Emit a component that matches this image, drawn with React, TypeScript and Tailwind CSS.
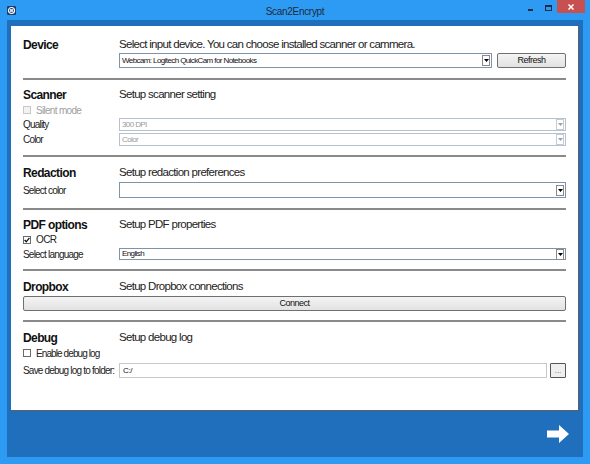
import React from 'react';

const Arrow = ({ disabled }: { disabled?: boolean }) => (
  <div
    className={`w-[8px] h-[11px] border flex items-center justify-center bg-white ${
      disabled ? 'border-[#c4ccd6]' : 'border-[#8a8a8a]'
    }`}
  >
    <svg width="5" height="3" viewBox="0 0 5 3">
      <polygon points="0,0 5,0 2.5,3" fill={disabled ? '#a0a0a0' : '#000'} />
    </svg>
  </div>
);

const Select = ({ text, disabled, className = '' }: { text?: string; disabled?: boolean; className?: string }) => (
  <div
    className={`flex items-center h-full bg-white border pl-[2px] pr-px ${
      disabled ? 'border-[#b6c2d0]' : 'border-[#7f93aa]'
    } ${className}`}
  >
    <span
      className={`flex-1 text-[8px] tracking-[-0.6px] leading-none ${disabled ? 'text-[#9a9a9a]' : 'text-[#111]'}`}
    >
      {text}
    </span>
    <Arrow disabled={disabled} />
  </div>
);

const Button = ({ label, className = '' }: { label: string; className?: string }) => (
  <div
    className={`flex items-center justify-center h-full border border-[#707070] rounded-[2px] bg-gradient-to-b from-[#f4f4f4] to-[#e2e2e2] text-[9px] tracking-[-0.5px] text-[#111] ${className}`}
  >
    {label}
  </div>
);

const Check = ({ checked, disabled }: { checked?: boolean; disabled?: boolean }) => (
  <div
    className={`w-[8px] h-[8px] border flex items-center justify-center ${
      disabled ? 'border-[#c8c8c8] bg-[#f2f2f2]' : 'border-[#6a6a6a] bg-white'
    }`}
  >
    {checked && (
      <svg width="6" height="6" viewBox="0 0 6 6">
        <path d="M0.6 3 L2.3 4.8 L5.4 0.9" stroke="#111" strokeWidth="1.3" fill="none" />
      </svg>
    )}
  </div>
);

const Heading = ({ title, desc, className = '' }: { title: string; desc: string; className?: string }) => (
  <div className={`flex items-center h-[16px] ${className}`}>
    <span className="w-[96px] text-[12px] font-bold tracking-[-0.6px] text-[#111]">{title}</span>
    <span className="text-[11.5px] tracking-[-0.7px] text-[#222]">{desc}</span>
  </div>
);

const Label = ({ children }: { children: React.ReactNode }) => (
  <span className="w-[96px] shrink-0 text-[10px] tracking-[-0.8px] text-[#222]">{children}</span>
);

const Sep = ({ className = '' }: { className?: string }) => <div className={`h-[2px] bg-[#8a8a8a] ${className}`} />;

export default function App() {
  return (
    <div className="w-[590px] h-[464px] bg-[#2d9bf3] flex flex-col font-['Liberation_Sans',Arial,sans-serif]">
      {/* title bar */}
      <div className="h-[20px] grid grid-cols-[1fr_auto_1fr]">
        <div className="pl-[7px] pt-[6px]">
          <svg width="9" height="9" viewBox="0 0 9 9">
            <rect x="0" y="0" width="9" height="9" rx="1" fill="#1b3f72" />
            <circle cx="4.5" cy="4.5" r="3" stroke="#fff" strokeWidth="1.2" fill="none" />
            <rect x="3" y="3" width="3" height="3" fill="#c9d6e6" />
          </svg>
        </div>
        <div className="pt-[4px] text-[10px] tracking-[-0.3px] text-[#1e2a3a]">Scan2Encrypt</div>
        <div className="flex justify-end items-start pr-[5px]">
          <div className="w-[5px] h-[2px] bg-[#1b2a40] mt-[9px] mr-[12px]" />
          <div className="w-[7px] h-[6px] border border-[#1b2a40] border-t-2 mt-[5px] mr-[5px]" />
          <div className="w-[28px] h-[13px] bg-[#c75050] flex items-center justify-center">
            <svg width="6" height="6" viewBox="0 0 6 6">
              <path d="M0.5 0.5 L5.5 5.5 M5.5 0.5 L0.5 5.5" stroke="#fff" strokeWidth="1.5" />
            </svg>
          </div>
        </div>
      </div>

      {/* body */}
      <div className="flex-1 mx-[7px] mb-[7px] bg-[#1f6fbc] flex flex-col pt-[6px] px-[4px]">
        <div className="h-[385px] bg-white border-r border-b border-[#5f5f5f] pl-[12px] pr-[12px] pt-[11px] flex flex-col">
          {/* Device */}
          <Heading title="Device" desc="Select input device. You can choose installed scanner or cammera." />
          <div className="flex h-[15px] pl-[96px] gap-[5px]">
            <Select text="Webcam: Logitech QuickCam for Notebooks" className="flex-1" />
            <Button label="Refresh" className="w-[69px]" />
          </div>
          <Sep className="mt-[10px]" />

          {/* Scanner */}
          <Heading title="Scanner" desc="Setup scanner setting" className="mt-[7px]" />
          <div className="flex items-center h-[14px] gap-[5px]">
            <Check disabled />
            <span className="text-[10px] tracking-[-0.7px] text-[#a0a0a0]">Silent mode</span>
          </div>
          <div className="flex items-center h-[13px] mt-px">
            <Label>Quality</Label>
            <Select text="300 DPI" disabled className="flex-1" />
          </div>
          <div className="flex items-center h-[13px] mt-[2px]">
            <Label>Color</Label>
            <Select text="Color" disabled className="flex-1" />
          </div>
          <Sep className="mt-[9px]" />

          {/* Redaction */}
          <Heading title="Redaction" desc="Setup redaction preferences" className="mt-[8px]" />
          <div className="flex items-center h-[16px] mt-px">
            <Label>Select color</Label>
            <Select className="flex-1" />
          </div>
          <Sep className="mt-[10px]" />

          {/* PDF options */}
          <Heading title="PDF options" desc="Setup PDF properties" className="mt-[7px]" />
          <div className="flex items-center h-[13px] gap-[5px]">
            <Check checked />
            <span className="text-[10px] tracking-[-0.6px] text-[#222]">OCR</span>
          </div>
          <div className="flex items-center h-[12px] mt-[2px]">
            <Label>Select language</Label>
            <Select text="English" className="flex-1" />
          </div>
          <Sep className="mt-[9px]" />

          {/* Dropbox */}
          <Heading title="Dropbox" desc="Setup Dropbox connections" className="mt-[8px]" />
          <div className="h-[15px] mt-px">
            <Button label="Connect" />
          </div>
          <Sep className="mt-[9px]" />

          {/* Debug */}
          <Heading title="Debug" desc="Setup debug log" className="mt-[8px]" />
          <div className="flex items-center h-[14px] gap-[5px]">
            <Check />
            <span className="text-[10px] tracking-[-0.9px] text-[#222]">Enable debug log</span>
          </div>
          <div className="flex items-center h-[15px] mt-[3px]">
            <Label>Save debug log to folder:</Label>
            <div className="flex-1 h-full border border-[#c8c8c8] bg-white flex items-center pl-[3px] text-[8px] tracking-[-0.4px] text-[#111]">
              C:/
            </div>
            <div className="w-[16px] h-full ml-[3px] border border-[#555] rounded-[1px] bg-[#efefef] flex items-center justify-center text-[8px] leading-none text-[#666]">
              ...
            </div>
          </div>
        </div>

        {/* next arrow */}
        <div className="flex-1 flex items-center justify-end pr-[10px]">
          <svg width="22" height="18" viewBox="0 0 22 18">
            <polygon points="0,5.5 12,5.5 12,0 22,9 12,18 12,12.5 0,12.5" fill="#fff" />
          </svg>
        </div>
      </div>
    </div>
  );
}
